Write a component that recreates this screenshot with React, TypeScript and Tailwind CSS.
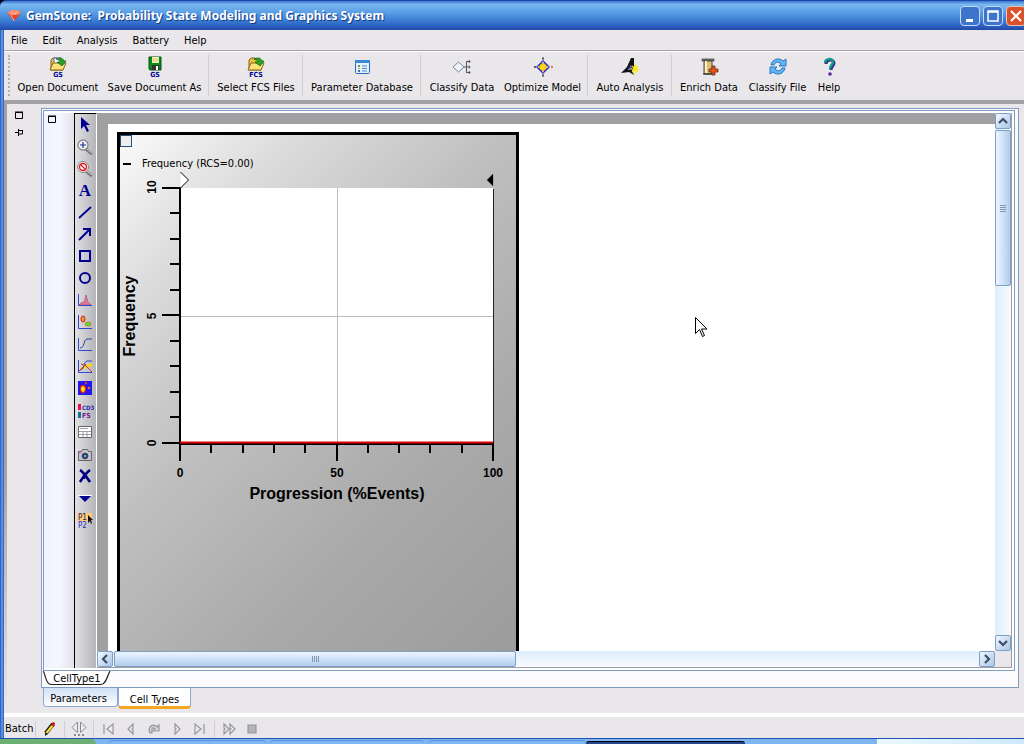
import type { ReactNode } from 'react';
import clsx from 'clsx';

const menus = ['File', 'Edit', 'Analysis', 'Battery', 'Help'];

function Folder({ label, page }: { label: string; page?: boolean }) {
  return (
    <svg width="24" height="24" viewBox="0 0 24 24">
      <path d="M5 5l2-2h4l1 2h5v10H5z" fill="#e8c040" stroke="#8a6414" />
      {page && <path d="M8 3h7v7H8z" fill="#fff" stroke="#5566cc" />}
      <path d="M4 15l3-7h13l-3 7z" fill="#fbe27a" stroke="#8a6414" />
      <path d="M10 4c4-2 7-1 8 2h2l-4 5-5-4h3c0-2-2-2-4-3z" fill="#2aa02a" stroke="#0c6410" strokeWidth=".7" />
      <text x="12" y="22" textAnchor="middle" fontSize="7" fontWeight="bold" fill="#000090">
        {label}
      </text>
    </svg>
  );
}

function SaveIcon() {
  return (
    <svg width="24" height="24" viewBox="0 0 24 24">
      <path d="M6 2h12v13H7l-1-1z" fill="#0a8a1a" stroke="#065010" />
      <path d="M9 2h7v6H9z" fill="#f6f3b0" />
      <path d="M9 4h7M9 6h7" stroke="#c8c070" strokeWidth=".7" />
      <path d="M9 10h7v5H9z" fill="#333" />
      <path d="M13 11h2v4h-2z" fill="#fff" />
      <text x="12" y="22" textAnchor="middle" fontSize="7" fontWeight="bold" fill="#000090">
        GS
      </text>
    </svg>
  );
}

function DatabaseIcon() {
  return (
    <svg width="24" height="24" viewBox="0 0 24 24">
      <rect x="5.500" y="5.500" width="14" height="13" rx="1" fill="#e4f2fc" stroke="#2b6cb8" />
      <path d="M5 5h15v3H5z" fill="#3b8ada" />
      <path d="M8 10h2v2H8z" fill="#5a9a4a" />
      <path d="M8 13h2v1H8z" fill="#e0a030" />
      <path d="M8 15h2v2H8z" fill="#3a70c0" />
      <path d="M12 11h5M12 13.500h5M12 16h5" stroke="#4d8cc8" />
    </svg>
  );
}

function ClassifyDataIcon() {
  return (
    <svg width="24" height="24" viewBox="0 0 24 24" fill="none" stroke="#555">
      <path d="M3 12l5.500-5 5.500 5-5.500 5z" fill="#eef4fa" stroke="#7a8490" />
      <path d="M14 12h6M16.500 6v12M17 6.500h3M17 17.500h3" />
      <path d="M19 5l1 1.500-1 1.500M19 10.500l1 1.500-1 1.500M19 16l1 1.500-1 1.500" />
    </svg>
  );
}

function OptimizeIcon() {
  return (
    <svg width="24" height="24" viewBox="0 0 24 24">
      <path d="M12 5l7 7-7 7-7-7z" fill="#2020c8" />
      <path d="M12 6l2 4 4 2-4 2-2 4-2-4-4-2 4-2z" fill="#f0e8d0" />
      <circle cx="12" cy="12" r="3.500" fill="#ffd820" stroke="#c09000" strokeWidth=".6" />
      <path d="M12 2v2M11 4h2M12 20v2M11 20h2M3 12h2M4 11v2" stroke="#333" />
      <path d="M20 11l2 1-2 1" fill="none" stroke="#e06030" />
    </svg>
  );
}

function WizardIcon() {
  return (
    <svg width="24" height="24" viewBox="0 0 24 24">
      <path d="M16 3h-3L9 12l-6 6 8-1 5 3-2-4 2-4z" fill="#111" />
      <path d="M13 10l-3 5 4-1z" fill="#e9e7ea" />
      <path d="M11 13l3-1" stroke="#2040c0" strokeWidth="2" />
      <path d="M17 9v10M13 14h8M14 11l6 6M20 11l-6 6" stroke="#ffe800" strokeWidth="1.200" />
    </svg>
  );
}

function EnrichIcon() {
  return (
    <svg width="24" height="24" viewBox="0 0 24 24">
      <path d="M5 4h12v2H5z" fill="#777" stroke="#333" strokeWidth=".7" />
      <path d="M7 6h8v13H7z" fill="#e0c070" stroke="#444" />
      <path d="M8 6h2v12H8z" fill="#f8eecb" />
      <path d="M6 19h9" stroke="#222" />
      <path d="M15 11h3v3h3v3h-3v3h-3v-3h-3v-3h3z" fill="#e85018" stroke="#63301c" strokeWidth=".8" />
    </svg>
  );
}

function RefreshIcon() {
  return (
    <svg width="24" height="24" viewBox="0 0 24 24" fill="#62b6f4" stroke="#1c6cc0" strokeWidth=".9">
      <path d="M5 10c1-6 8-8 12-4l3-2v7h-7l2-2c-3-3-6-2-7 1z" />
      <path d="M19 13c-1 6-8 8-12 4l-3 2v-7h7l-2 2c3 3 6 2 7-1z" />
    </svg>
  );
}

function HelpIcon() {
  return (
    <svg width="24" height="24" viewBox="0 0 24 24" fill="none">
      <path d="M9 9c0-5 8-5 8-1 0 3-3 3-3 7" stroke="#3a2a90" strokeWidth="3" />
      <path d="M8 8c0-5 8-5 8-1 0 3-3 3-3 7" stroke="#0c9c84" strokeWidth="2.500" />
      <circle cx="13" cy="19" r="1.800" fill="#5a20a0" />
    </svg>
  );
}

const toolGroups: { label: string; width: string; icon: ReactNode }[][] = [
  [
    { label: 'Open Document', width: 'w-[90px]', icon: <Folder label="GS" page /> },
    { label: 'Save Document As', width: 'w-[103px]', icon: <SaveIcon /> },
  ],
  [{ label: 'Select FCS Files', width: 'w-[88px]', icon: <Folder label="FCS" /> }],
  [{ label: 'Parameter Database', width: 'w-[112px]', icon: <DatabaseIcon /> }],
  [
    { label: 'Classify Data', width: 'w-[76px]', icon: <ClassifyDataIcon /> },
    { label: 'Optimize Model', width: 'w-[85px]', icon: <OptimizeIcon /> },
  ],
  [{ label: 'Auto Analysis', width: 'w-[78px]', icon: <WizardIcon /> }],
  [
    { label: 'Enrich Data', width: 'w-[68px]', icon: <EnrichIcon /> },
    { label: 'Classify File', width: 'w-[69px]', icon: <RefreshIcon /> },
    { label: 'Help', width: 'w-[34px]', icon: <HelpIcon /> },
  ],
];

// Palette drawings share an 18x18 grid
const palette: { name: string; art: ReactNode }[] = [
  { name: 'Select', art: <path d="M5 1v12l3-3 3 6 2-1-3-6h4z" fill="#000090" /> },
  {
    name: 'Zoom in',
    art: (
      <>
        <path d="M10 11l6 5" stroke="#777" strokeWidth="3" />
        <path d="M11 11l5 4" stroke="#ddd" />
        <circle cx="7" cy="7" r="5" fill="#f2f4fa" stroke="#888" strokeWidth="1.300" />
        <path d="M4 7h6M7 4v6" stroke="#1a3090" strokeWidth="1.200" />
      </>
    ),
  },
  {
    name: 'Zoom off',
    art: (
      <>
        <path d="M10 11l6 5" stroke="#777" strokeWidth="3" />
        <path d="M11 11l5 4" stroke="#ddd" />
        <circle cx="7" cy="7" r="5.500" fill="#f2f4fa" stroke="#888" />
        <circle cx="7" cy="7" r="3.500" fill="#fff" stroke="#e01818" strokeWidth="1.400" />
        <path d="M4.500 4.500l5 5" stroke="#e01818" strokeWidth="1.300" />
      </>
    ),
  },
  {
    name: 'Text',
    art: (
      <text x="9" y="14" textAnchor="middle" className="font-['Liberation_Serif',serif]" fontSize="17" fontWeight="bold" fill="#000090">
        A
      </text>
    ),
  },
  { name: 'Line', art: <path d="M3 14L15 3" stroke="#000090" strokeWidth="1.800" /> },
  {
    name: 'Arrow',
    art: <path d="M3 14L14 3M7 3h7v7" fill="none" stroke="#000090" strokeWidth="2" />,
  },
  { name: 'Rectangle', art: <rect x="4" y="3" width="10" height="10" fill="none" stroke="#000090" strokeWidth="2" /> },
  { name: 'Ellipse', art: <circle cx="9" cy="8" r="5" fill="none" stroke="#000090" strokeWidth="2" /> },
  {
    name: 'Histogram',
    art: (
      <>
        <path d="M3 13l3-3 2 1 2-8 2 7 3 3z" fill="#e07c88" stroke="#a04080" strokeWidth=".6" />
        <path d="M2.500 2v11.500H16" fill="none" stroke="#3048d0" />
      </>
    ),
  },
  {
    name: 'Dot plot',
    art: (
      <>
        <path d="M2.500 1v13.500H16" fill="none" stroke="#3048d0" />
        <ellipse cx="7" cy="5" rx="2" ry="3" fill="#f0a020" stroke="#d02020" />
        <ellipse cx="12" cy="10" rx="3" ry="2" fill="#50e030" stroke="#d07020" strokeWidth=".8" />
      </>
    ),
  },
  {
    name: 'Curve',
    art: (
      <>
        <path d="M2.500 2v12.500H16" fill="none" stroke="#3048d0" />
        <path d="M4 12c5 0 3-8 7-9h5" fill="none" stroke="#2040a0" />
      </>
    ),
  },
  {
    name: 'Overlay',
    art: (
      <>
        <path d="M4 11c4 0 5-5 12-4" fill="none" stroke="#ffd800" strokeWidth="2.500" />
        <path d="M5 6l5 2 6 6M3 13l7-7" fill="none" stroke="#e03020" />
        <path d="M4 12c5 0 3-8 7-9h5M2.500 2v12.500H16" fill="none" stroke="#3048d0" />
      </>
    ),
  },
  {
    name: 'Density',
    art: (
      <>
        <path d="M2 1h14v14H2z" fill="#2018f0" />
        <ellipse cx="7" cy="9" rx="2.500" ry="3.500" fill="#ffe820" stroke="#e02010" strokeWidth="1.300" />
        <circle cx="13" cy="8" r="1.300" fill="#f06010" />
        <circle cx="10" cy="3" r="1.200" fill="#e03060" />
      </>
    ),
  },
  {
    name: 'Legend',
    art: (
      <>
        <path d="M2 2h3v6H2z" fill="#e81050" />
        <path d="M2 10h3v6H2z" fill="#107890" />
        <text x="6" y="8" fontSize="6" fontWeight="bold" fill="#2828b0">
          CD3
        </text>
        <text x="6" y="16" fontSize="7" fontWeight="bold" fill="#702090">
          FS
        </text>
      </>
    ),
  },
  {
    name: 'Table',
    art: (
      <>
        <path d="M2.500 2.500h13v11h-13z" fill="#fff" stroke="#666" />
        <path d="M3 7.500h12M3 10.500h12M7 7v6M11 7v6" stroke="#8a8a94" strokeWidth=".8" />
        <path d="M4 5l1-1 1 1 1-1 1 1 1-1 1 1 1-1 1 1" fill="none" stroke="#666" strokeWidth=".6" />
      </>
    ),
  },
  {
    name: 'Snapshot',
    art: (
      <>
        <path d="M2.500 5.500h3l1-2h5l1 2h3v9h-13z" fill="#c4c4cc" stroke="#666" />
        <circle cx="9" cy="10" r="3" fill="#203080" stroke="#555" />
        <circle cx="9" cy="10" r="1.200" fill="#60c0d0" />
        <path d="M3 6h2v2H3z" fill="#f080d0" />
      </>
    ),
  },
  {
    name: 'Delete',
    art: <path d="M4 2c2 1 6 6 10 12M14 2c-4 3-7 7-10 12M8 7v4" fill="none" stroke="#000080" strokeWidth="2.600" />,
  },
  {
    name: 'More',
    art: (
      <>
        <path d="M2 5.500h14" stroke="#fff" />
        <path d="M3 6h12l-6 6z" fill="#000090" />
      </>
    ),
  },
  {
    name: 'Parameters',
    art: (
      <>
        <path d="M1 1h15v8H1z" fill="#ffca70" />
        <text x="2" y="8" fontSize="8" fill="#222280">
          P1
        </text>
        <text x="2" y="16" fontSize="8" fill="#2828c0">
          P2
        </text>
        <path d="M12 3v8l2-2 1 3 1-1-1-3h2z" fill="#111" />
      </>
    ),
  },
];

// A null entry is a divider
const playback: ({ name: string; art: ReactNode } | null)[] = [
  { name: 'First', art: <path d="M4 3v10M13 3v10L7 8z" /> },
  { name: 'Previous', art: <path d="M10 3L5 8l5 5V9L9 8l1-1z" /> },
  { name: 'Repeat', art: <path d="M4 12C1 5 8 2 11 6l2-2v6H7l2-2C7 6 5 7 6 12z" fill="#d4d4d8" /> },
  { name: 'Next', art: <path d="M6 3l5 5-5 5V9l1-1-1-1z" /> },
  { name: 'Last', art: <path d="M12 3v10M3 3v10l6-5z" /> },
  null,
  { name: 'Fast forward', art: <path d="M3 3l5 5-5 5V9l1-1-1-1zM9 3l5 5-5 5V9l1-1-1-1z" /> },
  { name: 'Stop', art: <path d="M4 4h8v8H4z" fill="#b4b4b8" /> },
];

function Chart() {
  const x = (v: number) => 60 + Math.round(v * 3.13);
  const y = (v: number) => 271 - Math.round(v * 25.5);
  const steps = [0, 1, 2, 3, 4, 5, 6, 7, 8, 9, 10];

  return (
    <svg
      width="396"
      height="340"
      viewBox="0 0 396 340"
      className="block font-['Liberation_Sans',sans-serif] font-bold"
      role="img"
      aria-label="Frequency against progression"
    >
      <rect x={x(0)} y={y(10)} width={x(100) - x(0)} height={y(0) - y(10)} fill="#fff" />
      <path d="M60 144.500H373M217.500 16V270" stroke="#bdbdbd" />
      <path d="M373.500 17V271" stroke="#222" />
      <g stroke="#000" strokeWidth="2">
        <path d="M60 15V271" />
        {steps.map((s) => (
          <path key={s} d={`M60 ${y(s)}h${s % 5 ? -10 : -18}M${x(s * 10)} 271v${s % 5 ? 10 : 18}`} />
        ))}
        <path d="M60 272H374" />
      </g>
      <path d="M60 270.500H373" stroke="#e00000" strokeWidth="2" />
      <path d="M60.500 0v16l8.500-8z" fill="#fff" />
      <path d="M60.500 0l8 8-8 8" fill="none" stroke="#000" />
      <path d="M373.500 1v14l-7-7z" fill="#000" stroke="#eee" strokeWidth=".5" />
      <g fontSize="12" textAnchor="middle">
        <text x="60" y="305">0</text>
        <text x="217" y="305">50</text>
        <text x="373" y="305">100</text>
        <text transform="translate(36 271) rotate(-90)">0</text>
        <text transform="translate(36 144) rotate(-90)">5</text>
        <text transform="translate(36 15) rotate(-90)">10</text>
      </g>
      <g fontSize="16" textAnchor="middle">
        <text x="217" y="327">Progression (%Events)</text>
        <text transform="translate(15 144) rotate(-90)">Frequency</text>
      </g>
    </svg>
  );
}

function ScrollButton({ label, d }: { label: string; d: string }) {
  return (
    <button
      type="button"
      aria-label={label}
      className="flex size-4 shrink-0 items-center justify-center rounded-xs border border-[#7f9fc6] bg-linear-to-br from-[#f2f8ff] to-[#a9c6e8]"
    >
      <svg width="10" height="10" viewBox="0 0 10 10" fill="none" stroke="#3e4d66" strokeWidth="2.200">
        <path d={d} />
      </svg>
    </button>
  );
}

function TitleBar() {
  const base = 'flex size-5 shrink-0 items-center justify-center rounded-sm border';
  return (
    <header className="flex h-[30px] shrink-0 items-center gap-1 rounded-tl-md border-t border-[#1f45a8] bg-[linear-gradient(180deg,#3a78d4_0%,#79b7ee_12%,#5b9fe6_38%,#3d80d4_65%,#2a5dbf_88%,#2348a4_100%)] pt-px pl-[6px]">
      <svg width="16" height="16" viewBox="0 0 16 16">
        <path d="M1 5l4-3h7l3 3-7 8z" fill="#e8442c" />
        <path d="M1 5l4-3h7l3 3-4 2H5z" fill="#f58c74" />
        <path d="M5 4l4 2 3-3M5 7l3 6" fill="none" stroke="#ffc8b4" strokeWidth=".8" />
      </svg>
      <h1 className="flex-1 font-['Noto_Sans',sans-serif] text-[12px] leading-5 font-bold whitespace-pre text-white [text-shadow:1px_1px_0_#173a86]">
        {'GemStone:  Probability State Modeling and Graphics System'}
      </h1>
      <div className="-mr-[2px] flex gap-[3px]">
        <button type="button" aria-label="Minimize" className={clsx(base, 'border-[#c4dcf6] bg-[#3d74cc]')}>
          <svg width="14" height="14" viewBox="0 0 14 14">
            <path d="M3 10h7v3H3z" fill="#fff" />
          </svg>
        </button>
        <button type="button" aria-label="Maximize" className={clsx(base, 'border-[#c4dcf6] bg-[#3d74cc]')}>
          <svg width="14" height="14" viewBox="0 0 14 14">
            <path d="M2 2h10v10H2zM2 3h10" fill="none" stroke="#fff" strokeWidth="1.500" />
          </svg>
        </button>
        <button type="button" aria-label="Close" className={clsx(base, 'border-[#f0c0b0] bg-[#d9532e]')}>
          <svg width="14" height="14" viewBox="0 0 14 14">
            <path d="M2 2l10 10M12 2L2 12" stroke="#fff" strokeWidth="2" />
          </svg>
        </button>
      </div>
    </header>
  );
}

function Toolbar() {
  return (
    <div className="flex h-[49px] shrink-0 pl-1">
      <div className="my-1 mr-[2px] w-[3px] border-l-2 border-dotted border-[#b4b2b8]" />
      {toolGroups.map((group, i) => (
        <div key={group[0].label} className="flex">
          {i > 0 && <div className="mr-[3px] ml-[2px] my-1 w-px bg-[#cfcdd3]" />}
          {group.map((tool) => (
            <button
              key={tool.label}
              type="button"
              className={clsx('flex flex-col items-center pt-1 whitespace-nowrap', tool.width)}
            >
              {tool.icon}
              <span className="leading-[18px]">{tool.label}</span>
            </button>
          ))}
        </div>
      ))}
    </div>
  );
}

function DockIcon({ pin }: { pin?: boolean }) {
  return (
    <svg width="8" height="8" viewBox="0 0 8 8" fill="none" stroke="#000">
      {pin ? <path d="M0 4.500h3M3.500 1v7M3.500 2.500h4M3.500 6h4M7.500 2v4" /> : <path d="M.5 1.500h7v6h-7zM0 1h8" />}
    </svg>
  );
}

function Canvas() {
  return (
    <div className="flex min-w-0 flex-1 flex-col border-r border-b border-[#9a9ca8]">
      <div className="flex min-h-0 flex-1">
        <div className="relative flex min-w-0 flex-1 overflow-hidden bg-[#a0a0a2] pt-[11px] pl-[11px]">
          <div className="flex flex-1 bg-white pt-2 pl-[9px]">
            <section className="h-[540px] min-h-full w-[402px] overflow-hidden border-3 border-black bg-[linear-gradient(135deg,#fafafa_0%,#dadada_20%,#bfbfbf_42%,#a9a9a9_70%,#9b9b9b_100%)]">
              <input
                type="checkbox"
                aria-label="Select plot"
                className="block size-3 appearance-none border border-[#1c5180] bg-[#eeeeec]"
              />
              <div className="mt-2 flex h-[17px] items-center gap-[11px] pt-px pl-[3px]">
                <button type="button" aria-label="Collapse" className="h-[2px] w-2 bg-black" />
                <h2>Frequency (RCS=0.00)</h2>
              </div>
              <Chart />
            </section>
          </div>
          <svg className="absolute top-[204px] left-[598px]" width="13" height="21" viewBox="0 0 13 21">
            <path d="M.5 .5v16l4-4 3 7 2-1-3-6.500h5.500z" fill="#fff" stroke="#000" />
          </svg>
        </div>
        <div className="flex w-4 flex-col bg-linear-to-r from-[#deedfb] to-[#fafcff]">
          <ScrollButton label="Scroll up" d="M1 7l4-4 4 4" />
          <div className="mt-px flex h-[156px] flex-col items-center justify-center gap-px rounded-xs border border-[#7f9fc6] bg-linear-to-r from-[#edf5ff] via-[#cfe2fa] to-[#b2cce9]">
            {[0, 1, 2, 3].map((n) => (
              <i key={n} className="h-px w-[6px] bg-[#7e98b8]" />
            ))}
          </div>
          <div className="flex-1" />
          <ScrollButton label="Scroll down" d="M1 3l4 4 4-4" />
        </div>
      </div>
      <div className="flex h-4 shrink-0">
        <div className="flex flex-1 bg-linear-to-b from-[#deedfb] to-[#fafcff]">
          <ScrollButton label="Scroll left" d="M7 1L3 5l4 4" />
          <div className="ml-px flex w-[402px] items-center justify-center gap-px rounded-xs border border-[#7f9fc6] bg-linear-to-b from-[#edf5ff] via-[#cfe2fa] to-[#b2cce9]">
            {[0, 1, 2, 3].map((n) => (
              <i key={n} className="h-[6px] w-px bg-[#7e98b8]" />
            ))}
          </div>
          <div className="flex-1" />
          <ScrollButton label="Scroll right" d="M3 1l4 4-4 4" />
        </div>
        <div className="w-4 bg-[#e9e7ea]" />
      </div>
    </div>
  );
}

function Workspace() {
  return (
    <div className="flex min-h-0 flex-1 flex-col border border-[#809cc0] bg-[#fbfbfd] pt-px pl-px">
      <div className="mr-[3px] flex min-h-0 flex-1 border border-[#809cc0] bg-white pt-[2px] pr-[2px] pb-[2px]">
        <div className="w-[30px] shrink-0 bg-linear-to-r from-[#eef3ff] via-[#f5f7ff] to-[#e4e3ea] pt-[2px] pl-1">
          <button type="button" aria-label="Restore pane" className="block">
            <DockIcon />
          </button>
        </div>
        <div className="flex w-[23px] shrink-0 flex-col border-t border-r border-l border-t-black border-r-white border-l-black bg-linear-to-r from-[#e2e2e5] to-[#b4b4b9]">
          {palette.map((item) => (
            <button key={item.name} type="button" aria-label={item.name} className="flex h-[22px] items-center pl-px">
              <svg width="18" height="18" viewBox="0 0 18 18">
                {item.art}
              </svg>
            </button>
          ))}
        </div>
        <Canvas />
      </div>
      <div className="flex h-4 shrink-0">
        <button type="button" className="relative h-4 w-[68px]">
          <svg className="absolute inset-0" width="68" height="16" viewBox="0 0 68 16">
            <path d="M0 0c3 3 2 13 8 13.500h50c5 0 6-8 9-13.500" fill="#fff" stroke="#222" strokeWidth="1.200" />
          </svg>
          <span className="relative block leading-4">CellType1</span>
        </button>
      </div>
    </div>
  );
}

function StatusBar() {
  const sep = <div className="h-4 w-px bg-[#cfcdd3]" />;
  return (
    <footer className="flex h-[21px] shrink-0 items-center pt-[3px]">
      <span className="w-[31px] pl-px leading-4">Batch</span>
      {sep}
      <button type="button" aria-label="Edit batch" className="flex w-[28px] justify-center">
        <svg width="16" height="16" viewBox="0 0 16 16">
          <path d="M4 12L11 3" stroke="#222" strokeWidth="4.200" />
          <path d="M4.500 12L11 4" stroke="#ffe030" strokeWidth="2.200" />
          <path d="M9 4l3 2 1-4-2-1z" fill="#c01818" />
          <path d="M3 15v-4l3 2z" fill="#222" />
        </svg>
      </button>
      {sep}
      <button type="button" aria-label="Batch options" className="flex w-[28px] justify-center">
        <svg width="16" height="16" viewBox="0 0 16 16" fill="#ececf0" stroke="#8c8c90">
          <path d="M6.500 1L1 6.500l5.500 5zM9.500 1L15 6.500l-5.500 5z" />
          <path d="M3 14h10" strokeWidth="2" strokeDasharray="2 2" />
        </svg>
      </button>
      {sep}
      <div className="flex items-center pl-[2px]">
        {playback.map((item, i) =>
          item ? (
            <button key={item.name} type="button" aria-label={item.name} className="flex w-[23px] justify-center">
              <svg width="16" height="16" viewBox="0 0 16 16" fill="#ececf0" stroke="#98989c" strokeWidth="1.200">
                {item.art}
              </svg>
            </button>
          ) : (
            <div key={i} className="mr-[2px] ml-[3px] h-4 w-px bg-[#cfcdd3]" />
          ),
        )}
      </div>
    </footer>
  );
}

export default function App() {
  return (
    <div className="flex h-screen flex-col overflow-hidden bg-black font-['DejaVu_Sans_Condensed','DejaVu_Sans',sans-serif] text-[11px] text-black">
      <TitleBar />
      <div className="flex min-h-0 flex-1 bg-[#e9e7ea]">
        <div className="w-1 shrink-0 bg-linear-to-r from-[#2450b4] via-[#6ba2ea] to-[#2a56b4]" />
        <div className="flex min-w-0 flex-1 flex-col">
          <nav className="flex h-[21px] shrink-0 items-center gap-[15px] border-b border-[#a5a3a8] pt-px pl-[7px] shadow-[0_1px_0_#fff]">
            {menus.map((menu) => (
              <button key={menu} type="button" className="leading-4">
                {menu}
              </button>
            ))}
          </nav>
          <Toolbar />
          <div className="h-1 shrink-0 bg-[#a2a2a5]" />
          <main className="flex min-h-0 flex-1">
            <div className="w-[3px] shrink-0 bg-linear-to-b from-[#a2a2a5] from-60% to-[#e9e7ea]" />
            <aside className="flex w-[34px] shrink-0 flex-col gap-[9px] pt-[7px] pl-2">
              <button type="button" aria-label="Float panel" className="block size-2">
                <DockIcon />
              </button>
              <button type="button" aria-label="Pin panel" className="block size-2">
                <DockIcon pin />
              </button>
            </aside>
            <div className="flex min-w-0 flex-1 flex-col pt-1 pr-[5px]">
              <Workspace />
              <div className="flex h-[25px] shrink-0 items-start pl-[2px]">
                <button
                  type="button"
                  className="h-[19px] w-[75px] rounded-b-sm border border-t-0 border-[#8fa9cc] bg-linear-to-b from-[#cfe0f6] to-white pt-[3px] pr-1"
                >
                  Parameters
                </button>
                <button
                  type="button"
                  className="h-[21px] w-[73px] rounded-b-sm border border-t-0 border-b-3 border-[#8fa9cc] border-b-[#f5a623] bg-white pt-[4px]"
                >
                  Cell Types
                </button>
              </div>
            </div>
          </main>
          <div className="h-1 shrink-0 bg-white" />
          <StatusBar />
        </div>
      </div>
      <div className="flex h-[6px] shrink-0 border-t border-[#2450b4] bg-[#7db7f2]">
        <div className="w-24 rounded-tr-lg bg-[#6db074]" />
        <div className="mt-px ml-3 w-[158px] rounded-t-sm border-t border-[#5a94dc]" />
        <div className="mt-px ml-1 w-[154px] rounded-t-sm border-t border-[#5a94dc]" />
        <div className="mt-px ml-1 w-[158px] rounded-t-sm border-t border-[#5a94dc]" />
        <div className="mt-[2px] w-[159px] rounded-t-sm border-t border-black bg-[#24448c]" />
        <div className="w-[132px]" />
        <div className="flex-1 bg-linear-to-r from-[#eaf8fc] to-[#cdeafa]" />
      </div>
    </div>
  );
}
